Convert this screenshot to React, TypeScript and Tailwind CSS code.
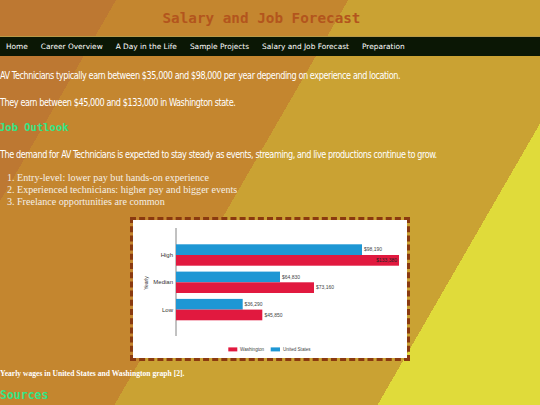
import React from "react";

const navItems = [
  "Home",
  "Career Overview",
  "A Day in the Life",
  "Sample Projects",
  "Salary and Job Forecast",
  "Preparation",
];

function Chart() {
  const label = "#444";
  return (
    <svg width="274" height="138" viewBox="0 0 274 138" className="block">
      <rect x="0" y="0" width="274" height="138" fill="#ffffff" />
      <line x1="43" y1="8" x2="43" y2="116" stroke="#666" strokeWidth="0.8" />
      {/* High */}
      <rect x="43" y="24.3" width="186" height="10.7" fill="#1e97d4" />
      <rect x="43" y="35" width="223" height="10.7" fill="#e1193f" />
      {/* Median */}
      <rect x="43" y="51.6" width="104" height="10.7" fill="#1e97d4" />
      <rect x="43" y="62.3" width="138" height="10.7" fill="#e1193f" />
      {/* Low */}
      <rect x="43" y="78.9" width="66.7" height="10.7" fill="#1e97d4" />
      <rect x="43" y="89.6" width="86.3" height="10.7" fill="#e1193f" />

      <g fontFamily="Liberation Sans, Arial, sans-serif" fontSize="6" fill="#333" textAnchor="end">
        <text x="40" y="37.2">High</text>
        <text x="40" y="64.4">Median</text>
        <text x="40" y="91.6">Low</text>
      </g>
      <text
        x="0"
        y="0"
        transform="translate(15 63) rotate(-90)"
        fontFamily="Liberation Sans, Arial, sans-serif"
        fontSize="5"
        fill="#333"
        textAnchor="middle"
      >
        Yearly
      </text>
      <g fontFamily="Liberation Sans, Arial, sans-serif" fontSize="5" fill={label}>
        <text x="231" y="31.4">$98,190</text>
        <text x="264" y="42.2" textAnchor="end" fill="#222">$133,380</text>
        <text x="149" y="58.7">$64,830</text>
        <text x="183" y="69.4">$73,160</text>
        <text x="111.5" y="85.9">$36,290</text>
        <text x="131.5" y="96.6">$45,850</text>
      </g>
      <rect x="95.3" y="127.4" width="9" height="4" fill="#e1193f" />
      <rect x="137.7" y="127.4" width="9.3" height="4" fill="#1e97d4" />
      <g fontFamily="Liberation Sans, Arial, sans-serif" fontSize="4.6" fill={label}>
        <text x="107" y="131">Washington</text>
        <text x="150" y="131">United States</text>
      </g>
    </svg>
  );
}

export default function App() {
  return (
    <div className="h-[405px] w-full overflow-hidden bg-[linear-gradient(120deg,#bd7832_15%,#c4862f_15%,#c4862f_45%,#caa233_45%,#caa233_79%,#e0db3a_79%)]">
      <header className="flex h-[36px] items-center justify-center pr-[17px]">
        <h1 className="font-['DejaVu_Sans_Mono',monospace] text-[14.3px] font-bold leading-none text-[#b3551d]">
          Salary and Job Forecast
        </h1>
      </header>
      <nav className="flex h-[20px] items-center gap-[13px] border-t border-[#b89a48] bg-[#0b1705] pl-[6px]">
        {navItems.map((item) => (
          <span
            key={item}
            className="font-['DejaVu_Sans',sans-serif] text-[7.4px] leading-none text-white"
          >
            {item}
          </span>
        ))}
      </nav>

      <main className="font-['DejaVu_Sans_Condensed','DejaVu_Sans',sans-serif] text-white">
        <p className="mt-[13px] origin-left scale-x-[0.82] whitespace-nowrap text-[11px] leading-[14px] tracking-[-0.5px]">
          AV Technicians typically earn between $35,000 and $98,000 per year depending on experience and location.
        </p>
        <p className="mt-[13px] origin-left scale-x-[0.82] whitespace-nowrap text-[11px] leading-[14px] tracking-[-0.5px]">
          They earn between $45,000 and $133,000 in Washington state.
        </p>
        <h3 className="-ml-[1px] mt-[10px] font-['DejaVu_Sans_Mono',monospace] text-[10.5px] font-bold leading-[14px] text-[#33e586]">
          Job Outlook
        </h3>
        <p className="mt-[14px] origin-left scale-x-[0.82] whitespace-nowrap text-[11px] leading-[14px] tracking-[-0.5px]">
          The demand for AV Technicians is expected to stay steady as events, streaming, and live productions continue to grow.
        </p>
        <ol className="mt-[10px] list-decimal pl-[17px] font-['Liberation_Serif',serif] text-[10.1px] leading-[12px] text-[#f4efe6]">
          <li>Entry-level: lower pay but hands-on experience</li>
          <li>Experienced technicians: higher pay and bigger events</li>
          <li>Freelance opportunities are common</li>
        </ol>
        <div className="mt-[9px] flex justify-center">
          <div className="border-[3px] border-dashed border-[#8a3a10]">
            <Chart />
          </div>
        </div>
        <p className="mt-[7px] font-['Liberation_Serif',serif] text-[7.6px] font-bold leading-[12px]">
          Yearly wages in United States and Washington graph [2].
        </p>
        <h2 className="mt-[8px] font-['DejaVu_Sans_Mono',monospace] text-[11.5px] font-bold leading-[14px] text-[#33e586]">
          Sources
        </h2>
      </main>
    </div>
  );
}
